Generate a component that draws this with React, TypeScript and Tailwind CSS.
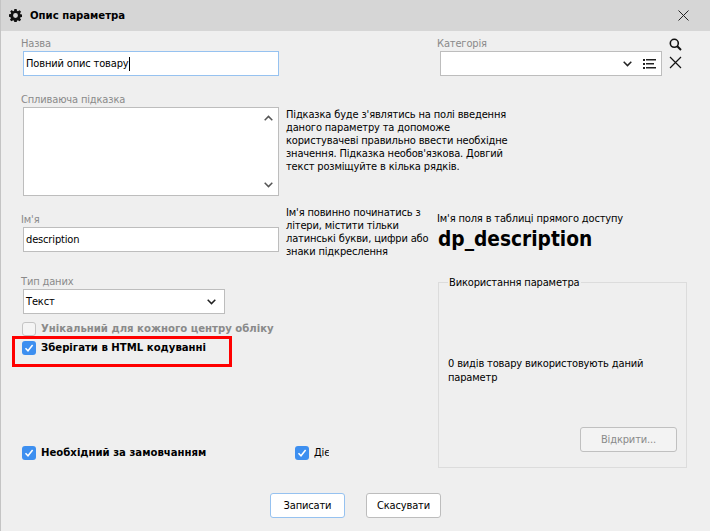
import React from "react";

function Check({ on = true }: { on?: boolean }) {
  if (!on)
    return <span className="block w-[14px] h-[14px] shrink-0 rounded-[3px] border border-[#c4c4c4] bg-[#f4f4f4]" />;
  return (
    <span className="flex items-center justify-center w-[14px] h-[14px] shrink-0 rounded-[3px] bg-[#3d8ff0]">
      <svg width="10" height="10" viewBox="0 0 10 10" fill="none">
        <path d="M1.5 5.2 L4 7.8 L8.6 2" stroke="#fff" strokeWidth="1.5" />
      </svg>
    </span>
  );
}

function Chevron({ className = "" }: { className?: string }) {
  return (
    <svg width="9" height="6" viewBox="0 0 9 6" fill="none" className={className}>
      <path d="M0.7 0.8 L4.5 4.600 L8.300 0.8" stroke="currentColor" strokeWidth="1.5" />
    </svg>
  );
}

function Label({ children, className = "" }: { children: React.ReactNode; className?: string }) {
  return <div className={`h-[16px] pt-[1px] leading-[15px] text-[#8a8a8a] ${className}`}>{children}</div>;
}

export default function App() {
  return (
    <div className="w-[710px] h-[531px] bg-[#efefef] text-[11px] tracking-[-0.15px] font-['DejaVu_Sans_Condensed','DejaVu_Sans',sans-serif] text-black relative overflow-hidden flex flex-col border-l border-[#c4c4c4]">
      <div className="h-[31px] shrink-0 bg-[#d6d6d6] flex items-center pl-[8px] pr-[21px]">
        <svg width="13" height="13" viewBox="0 0 16 16" fill="#111">
          <path
            fillRule="evenodd"
            d="M6.6 0h2.8l.4 2.2 1.2.5L12.9 1.4l2 2-1.3 1.9.5 1.2 2.2.4v2.8l-2.2.4-.5 1.2 1.3 1.9-2 2-1.9-1.3-1.2.5-.4 2.2H6.6l-.4-2.2-1.2-.5-1.9 1.3-2-2 1.3-1.9-.5-1.2L0 9.4V6.6l2.2-.4.5-1.2L1.400 3.100l2-2L5 2.700l1.200-.5zM8 5a3 3 0 1 0 0 6 3 3 0 0 0 0-6z"
          />
        </svg>
        <span className="ml-[8px] pt-[2px] font-bold text-[11.250px] tracking-normal">Опис параметра</span>
        <svg width="11" height="11" viewBox="0 0 11 11" className="ml-auto" fill="none">
          <path d="M0.5 0.5 L10.500 10.500 M10.500 0.5 L0.5 10.500" stroke="#222" strokeWidth="1" />
        </svg>
      </div>

      <div className="flex-1 flex flex-col pl-[20px]">
        {/* Назва / Категорія */}
        <div className="flex h-[45px] mt-[4px]">
          <div className="w-[416px]">
            <Label>Назва</Label>
            <div className="ml-[2px] w-[256px] h-[25px] bg-white border border-[#96c2f0] flex items-center pl-[2px] pt-[1px]">
              Повний опис товару<span className="w-px h-[14px] bg-black" />
            </div>
          </div>
          <div className="w-[225px]">
            <Label>Категорія</Label>
            <div className="ml-[3px] w-[222px] h-[25px] bg-white border border-[#bdbdbd] flex items-center justify-end pr-[5px] gap-[11px]">
              <Chevron className="text-[#222]" />
              <svg width="13" height="10" viewBox="0 0 13 10" fill="#222">
                <rect x="0" y="0" width="2" height="2" />
                <rect x="3" y="0" width="10" height="1.500" />
                <rect x="0" y="4" width="2" height="2" />
                <rect x="3" y="4" width="8" height="1.500" />
                <rect x="0" y="8" width="2" height="2" />
                <rect x="3" y="8" width="10" height="1.500" />
              </svg>
            </div>
          </div>
          <div className="ml-[7px] flex flex-col">
            <svg width="13" height="13" viewBox="0 0 13 13" fill="none" className="mt-[3px]">
              <circle cx="5.300" cy="5.300" r="4" stroke="#111" strokeWidth="1.600" />
              <path d="M8.300 8.300 L12 12" stroke="#111" strokeWidth="2" />
            </svg>
            <svg width="13" height="13" viewBox="0 0 13 13" fill="none" className="mt-[5px]">
              <path d="M1 1 L12 12 M12 1 L1 12" stroke="#111" strokeWidth="1.200" />
            </svg>
          </div>
        </div>

        {/* Спливаюча підказка */}
        <div className="flex mt-[11px] h-[105px]">
          <div className="w-[265px]">
            <Label>Спливаюча підказка</Label>
            <div className="ml-[2px] w-[256px] h-[89px] bg-white border border-[#bdbdbd] flex flex-col items-end justify-between pr-[5px] py-[7px] text-[#555]">
              <Chevron className="rotate-180" />
              <Chevron />
            </div>
          </div>
          <p className="w-[224px] mt-[17px] leading-[13px]">
            Підказка буде з'являтись на полі введення даного параметру та допоможе користувачеві правильно ввести необхідне
            значення. Підказка необов'язкова. Довгий текст розміщуйте в кілька рядків.
          </p>
        </div>

        {/* Ім'я */}
        <div className="flex mt-[9px] h-[61px]">
          <div className="w-[265px] mt-[6px]">
            <Label>Ім'я</Label>
            <div className="ml-[2px] w-[256px] h-[25px] bg-white border border-[#bdbdbd] flex items-center pl-[2px] pt-[2px]">description</div>
          </div>
          <p className="w-[145px] mt-[1px] leading-[13px]">
            Ім'я повинно починатись з літери, містити тільки латинські букви, цифри або знаки підкреслення
          </p>
          <div className="ml-[7px] mt-[7px]">
            <div className="-ml-[1px] leading-[13px]">Ім'я поля в таблиці прямого доступу</div>
            <div className="font-bold text-[20.700px] tracking-normal leading-[29px]">dp_description</div>
          </div>
        </div>

        {/* Нижня частина */}
        <div className="flex mt-[5px]">
          <div className="w-[417px] flex flex-col">
            <Label className="mt-[2px]">Тип даних</Label>
            <div className="ml-[2px] w-[202px] h-[25px] bg-white border border-[#bdbdbd] flex items-center justify-between pl-[2px] pr-[8px] pt-[1px]">
              Текст
              <Chevron className="text-[#222]" />
            </div>
            <div className="flex items-center gap-[5px] ml-[1px] mt-[8px] h-[14px] font-bold text-[11.250px] tracking-normal text-[#8a8a8a]">
              <Check on={false} />
              Унікальний для кожного центру обліку
            </div>
            <div className="flex items-center gap-[5px] ml-[1px] mt-[5px] h-[14px] font-bold text-[11.250px] tracking-normal">
              <Check />
              Зберігати в HTML кодуванні
            </div>
            <div className="flex items-center ml-[1px] mt-[91px] h-[14px] font-bold text-[11.250px] tracking-normal">
              <div className="w-[273px] flex items-center gap-[5px]">
                <Check />
                Необхідний за замовчанням
              </div>
              <div className="flex items-center gap-[5px] font-normal text-[11px] tracking-[-0.15px]">
                <Check />
                <span className="w-[15px] overflow-hidden">Діє</span>
              </div>
            </div>
          </div>
          <div className="relative mt-[11px] w-[249px] h-[186px] border border-[#dcdcdc] flex flex-col px-[9px]">
            <span className="absolute -top-[8px] left-[9px] bg-[#efefef] px-px leading-[15px]">Використання параметра</span>
            <p className="mt-[74px] leading-[14px]">0 видів товару використовують даний параметр</p>
            <div className="mt-[42px] self-end w-[97px] h-[25px] pt-[1px] rounded-[3px] border border-[#c0c0c0] bg-[#f3f3f3] text-[#8a8a8a] flex items-center justify-center">
              Відкрити...
            </div>
          </div>
        </div>

        {/* Кнопки */}
        <div className="flex mt-[25px] ml-[249px] gap-[21px]">
          <div className="w-[75px] h-[25px] pt-[2px] rounded-[3px] bg-white border border-[#96c2f0] flex items-center justify-center">Записати</div>
          <div className="w-[75px] h-[25px] pt-[2px] rounded-[3px] bg-white border border-[#bdbdbd] flex items-center justify-center">Скасувати</div>
        </div>
      </div>

      {/* Червона рамка поверх вмісту */}
      <div className="absolute left-[11px] top-[336px] w-[220px] h-[31px] border-[3px] border-[#ff0000]" />
    </div>
  );
}
